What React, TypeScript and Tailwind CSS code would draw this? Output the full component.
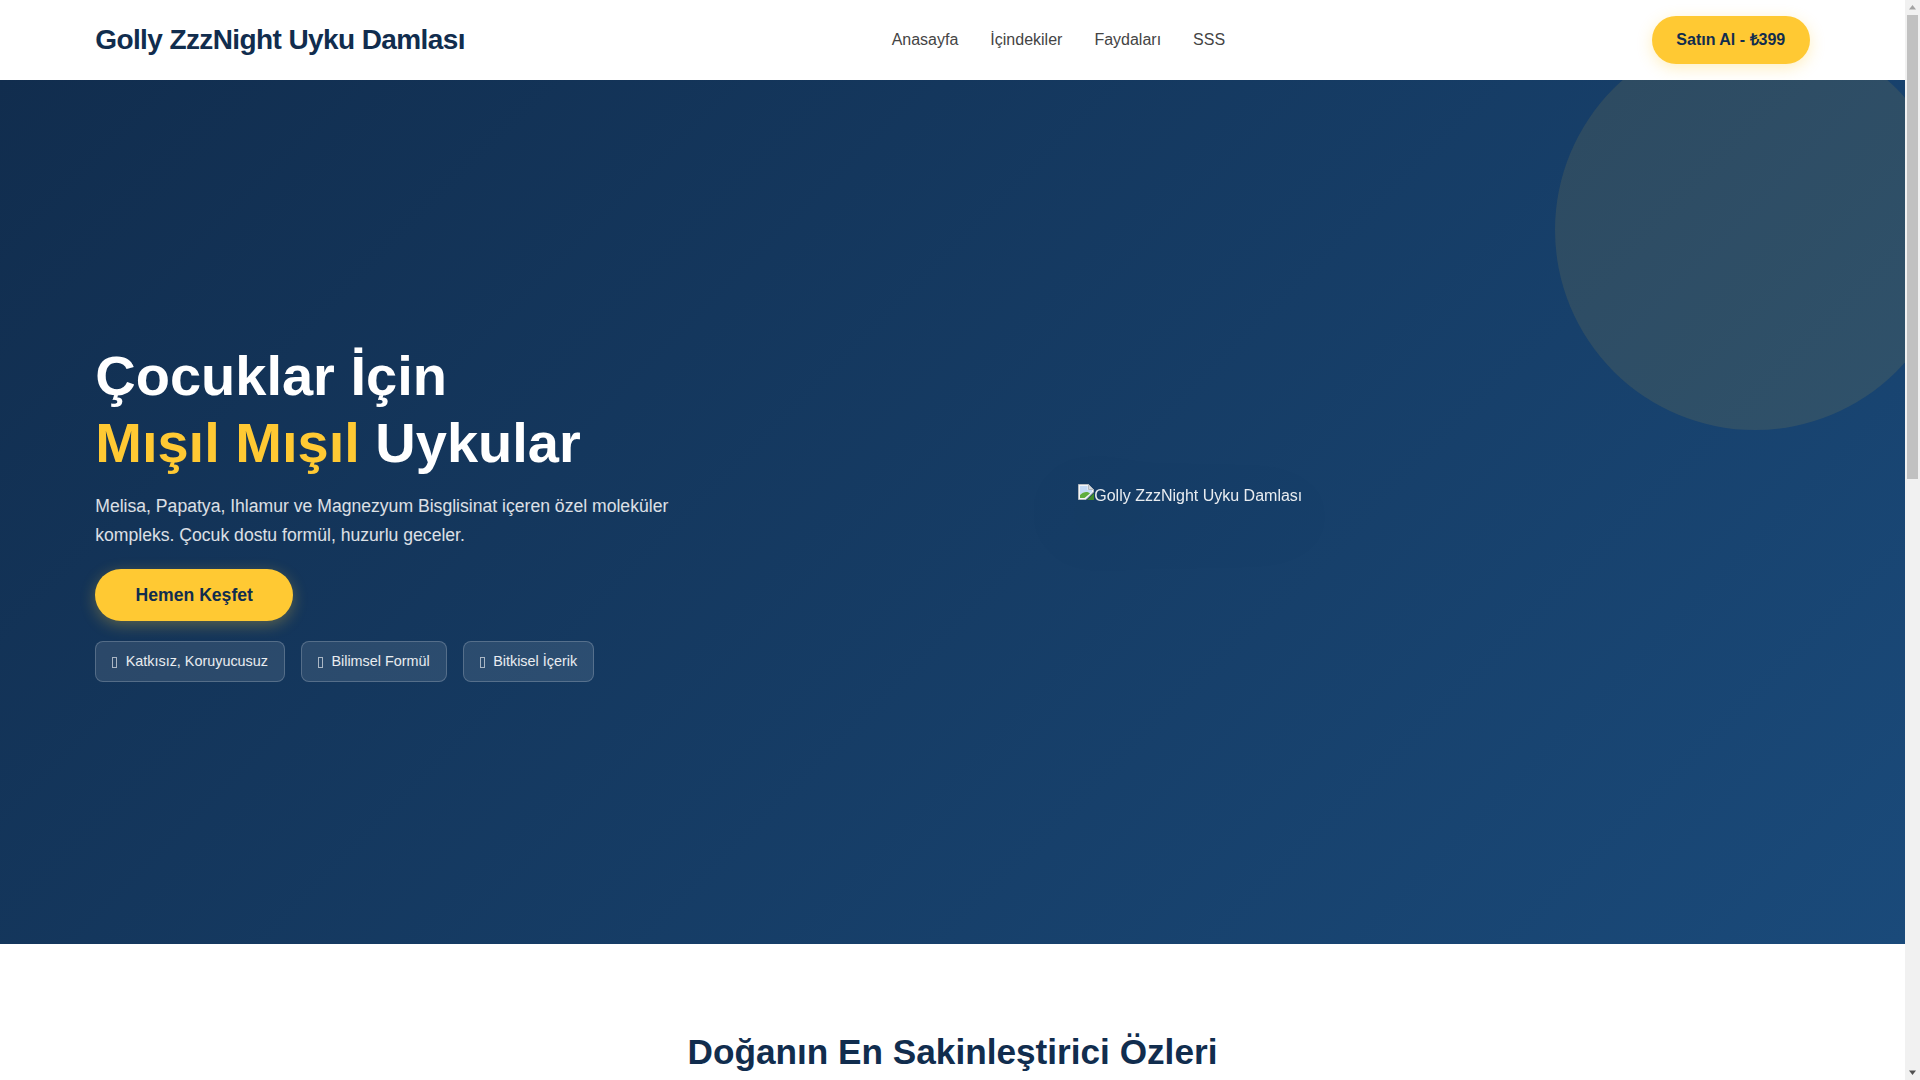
import React from 'react'

const navLinks = ['Anasayfa', 'İçindekiler', 'Faydaları', 'SSS']

const badges = ['Katkısız, Koruyucusuz', 'Bilimsel Formül', 'Bitkisel İçerik']

const BrokenImage = () => (
  <svg width="16" height="16" viewBox="0 0 16 16" className="inline-block align-top">
    <path d="M0.5 0.5H10.5L15.5 5.5V8L8 15.5H0.5Z" fill="#f4f6f8" stroke="#b4bac0" />
    <path d="M10.5 0.5V5.5H15.5Z" fill="#d4d8dc" stroke="#b4bac0" />
    <path d="M2 2H9.5V6H14V8L12 9.5C9 7 5 8 2 11Z" fill="#c5dcf7" />
    <path d="M2 11C5 8 9 7 12 9.5L6.5 14H2Z" fill="#5fae3e" />
    <path d="M9 16L16 9V16Z" fill="#3f8a2c" />
  </svg>
)

// the browser's own bar, it does not show in the headless run
const Scrollbar = () => (
  <aside className="w-[15px] shrink-0 flex flex-col items-center bg-[#f1f1f1]">
    <svg width="15" height="15" viewBox="0 0 15 15" className="shrink-0">
      <path d="M7.5 5L11 9.5H4Z" fill="#a3a3a3" />
    </svg>
    <div className="w-[11px] h-[464px] bg-[#c1c1c1]" />
    <div className="flex-1" />
    <svg width="15" height="15" viewBox="0 0 15 15" className="shrink-0">
      <path d="M7.5 10L11 5.5H4Z" fill="#505050" />
    </svg>
  </aside>
)

export default function App() {
  return (
    <div className="h-screen flex overflow-hidden font-['Liberation_Sans',Arial,sans-serif] text-[#444]">
      <main className="flex-1 min-w-0 overflow-hidden">
        <nav className="h-20 bg-white">
          <div className="w-[90%] h-full mx-auto flex items-center justify-between">
            <a className="text-[28px] font-bold tracking-[-0.6px] text-[#112d4e]">Golly ZzzNight Uyku Damlası</a>
            <ul className="flex gap-8 text-base text-[#444]">
              {navLinks.map(link => (
                <li key={link}>{link}</li>
              ))}
            </ul>
            <button className="h-12 px-[24.5px] rounded-3xl bg-[#ffc933] text-base font-bold text-[#112d4e] shadow-[0_4px_15px_rgba(255,201,51,0.3)]">
              Satın Al - ₺399
            </button>
          </div>
        </nav>

        <section className="relative h-[864px] overflow-hidden bg-[linear-gradient(135deg,#112d4e,#1a4a7a)]">
          <div className="absolute -top-[50px] -right-[50px] w-[400px] h-[400px] rounded-full bg-[#ffc933]/10" />
          <div className="relative w-[90%] h-full mx-auto flex items-center">
            <div className="w-[600px] shrink-0">
              <h1 className="text-[56px] leading-[1.2] font-bold text-white mb-4">
                Çocuklar İçin<br />
                <span className="text-[#ffc933]">Mışıl Mışıl</span> Uykular
              </h1>
              <p className="text-[17.6px] leading-[29px] text-white/85 mb-[19px]">
                Melisa, Papatya, Ihlamur ve Magnezyum Bisglisinat içeren özel moleküler kompleks. Çocuk dostu formül, huzurlu geceler.
              </p>
              <button className="w-[198px] h-[52px] pt-px rounded-[26px] bg-[#ffc933] text-[17.6px] font-bold text-[#112d4e] shadow-[0_4px_15px_rgba(255,201,51,0.3)] mb-5 block">
                Hemen Keşfet
              </button>
              <div className="flex gap-4">
                {badges.map(badge => (
                  <span key={badge} className="h-[41px] px-4 pt-px flex items-center gap-[8.4px] rounded-lg border border-white/20 bg-white/10 text-[14.4px] text-white/90">
                    <i className="w-[5px] h-[11px] border border-white/60" />
                    {badge}
                  </span>
                ))}
              </div>
            </div>
            <div className="flex-1 pl-[383px] pb-[32px]">
              <div className="text-base text-white/90 drop-shadow-[0_20px_30px_rgba(0,0,0,0.2)]">
                <BrokenImage />
                <span>Golly ZzzNight Uyku Damlası</span>
              </div>
            </div>
          </div>
        </section>

        <section className="h-[1500px] bg-white pt-20">
          <h2 className="text-center text-[35.2px] leading-[1.6] font-bold text-[#112d4e]">Doğanın En Sakinleştirici Özleri</h2>
        </section>
      </main>
      <Scrollbar />
    </div>
  )
}
